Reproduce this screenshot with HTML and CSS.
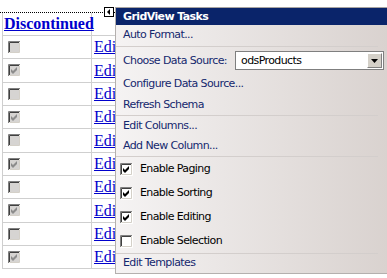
FILE: index.html
```html
<!DOCTYPE html>
<html>
<head>
<meta charset="utf-8">
<link rel="stylesheet" href="styles.css">
</head>
<body>
<svg class="defs" width="0" height="0" aria-hidden="true">
  <defs>
    <symbol id="box" viewBox="0 0 13 13">
      <path d="M0.5 12 V0.5 H12" stroke="#808080" fill="none"/>
      <path d="M1.5 11 V1.5 H11" stroke="#404040" fill="none"/>
      <path d="M0.5 12.5 H12.5 V0.5" stroke="#ffffff" fill="none"/>
      <path d="M1.5 11.5 H11.5 V1.5" stroke="#d4d0c8" fill="none"/>
    </symbol>
    <symbol id="tick" viewBox="0 0 13 13">
      <polygon points="3,5 5,7 9,3 9,6 5,10 3,8"/>
    </symbol>
  </defs>
</svg>
<div class="designer">
  <div class="grid-frame">
    <div class="grid">
      <div class="cell head"><a href="#">Discontinued</a></div>
      <div class="cell"></div>

      <div class="cell chk"><svg class="cb off" viewBox="0 0 13 13"><rect x="2" y="2" width="9" height="9"/><use href="#box"/></svg></div>
      <div class="cell"><a href="#">Edit</a></div>
      <div class="cell chk"><svg class="cb off" viewBox="0 0 13 13"><rect x="2" y="2" width="9" height="9"/><use href="#box"/><use class="mark" href="#tick"/></svg></div>
      <div class="cell"><a href="#">Edit</a></div>
      <div class="cell chk"><svg class="cb off" viewBox="0 0 13 13"><rect x="2" y="2" width="9" height="9"/><use href="#box"/></svg></div>
      <div class="cell"><a href="#">Edit</a></div>
      <div class="cell chk"><svg class="cb off" viewBox="0 0 13 13"><rect x="2" y="2" width="9" height="9"/><use href="#box"/><use class="mark" href="#tick"/></svg></div>
      <div class="cell"><a href="#">Edit</a></div>
      <div class="cell chk"><svg class="cb off" viewBox="0 0 13 13"><rect x="2" y="2" width="9" height="9"/><use href="#box"/></svg></div>
      <div class="cell"><a href="#">Edit</a></div>
      <div class="cell chk"><svg class="cb off" viewBox="0 0 13 13"><rect x="2" y="2" width="9" height="9"/><use href="#box"/><use class="mark" href="#tick"/></svg></div>
      <div class="cell"><a href="#">Edit</a></div>
      <div class="cell chk"><svg class="cb off" viewBox="0 0 13 13"><rect x="2" y="2" width="9" height="9"/><use href="#box"/></svg></div>
      <div class="cell"><a href="#">Edit</a></div>
      <div class="cell chk"><svg class="cb off" viewBox="0 0 13 13"><rect x="2" y="2" width="9" height="9"/><use href="#box"/><use class="mark" href="#tick"/></svg></div>
      <div class="cell"><a href="#">Edit</a></div>
      <div class="cell chk"><svg class="cb off" viewBox="0 0 13 13"><rect x="2" y="2" width="9" height="9"/><use href="#box"/></svg></div>
      <div class="cell"><a href="#">Edit</a></div>
      <div class="cell chk"><svg class="cb off" viewBox="0 0 13 13"><rect x="2" y="2" width="9" height="9"/><use href="#box"/><use class="mark" href="#tick"/></svg></div>
      <div class="cell"><a href="#">Edit</a></div>
    </div>
  </div>

  <span class="smart-tag"><svg viewBox="0 0 10 10" width="10" height="10"><rect x="0.5" y="0.5" width="9" height="9" fill="#fff" stroke="#000"/><polygon points="6,2 6,8 3,5" fill="#000"/></svg></span>

  <div class="tasks">
    <div class="tasks-head">GridView Tasks</div>
    <div class="item link r21">Auto Format...</div>
    <div class="sep"></div>
    <div class="choose">
      <span>Choose Data Source:</span>
      <div class="combo"><span class="combo-text">odsProducts</span><span class="combo-btn"><svg viewBox="0 0 7 4" width="7" height="4"><polygon points="0,0 7,0 3.5,4"/></svg></span></div>
    </div>
    <div class="item link r21">Configure Data Source...</div>
    <div class="item link r20">Refresh Schema</div>
    <div class="sep"></div>
    <div class="item link r20">Edit Columns...</div>
    <div class="item link r20">Add New Column...</div>
    <div class="sep"></div>
    <div class="opt"><svg class="cb on" viewBox="0 0 13 13"><rect x="2" y="2" width="9" height="9"/><use href="#box"/><use class="mark" href="#tick"/></svg><span>Enable Paging</span></div>
    <div class="opt"><svg class="cb on" viewBox="0 0 13 13"><rect x="2" y="2" width="9" height="9"/><use href="#box"/><use class="mark" href="#tick"/></svg><span>Enable Sorting</span></div>
    <div class="opt"><svg class="cb on" viewBox="0 0 13 13"><rect x="2" y="2" width="9" height="9"/><use href="#box"/><use class="mark" href="#tick"/></svg><span>Enable Editing</span></div>
    <div class="opt"><svg class="cb on" viewBox="0 0 13 13"><rect x="2" y="2" width="9" height="9"/><use href="#box"/></svg><span>Enable Selection</span></div>
    <div class="sep"></div>
    <div class="item link last">Edit Templates</div>
  </div>
</div>
</body>
</html>
```

FILE: styles.css
```css
html, body {
  margin: 0;
  background: #ffffff;
}

body {
  font-family: "Liberation Serif", "Times New Roman", serif;
}

.defs {
  position: absolute;
  width: 0;
  height: 0;
}

.designer {
  position: relative;
  width: 387px;
  height: 278px;
  overflow: hidden;
}

/* GridView design surface */
.grid-frame {
  margin-top: 12px;
  border-top: 1px dotted #000000;
}

.grid {
  display: grid;
  grid-template-columns: 89px 80px;
  grid-template-rows: 23px 23px 24px 23px 23px 24px 23px 23px 24px 23px 23px;
  margin-left: 2px;
  width: max-content;
  border-left: 1px solid #cfcfcf;
}

.cell {
  box-sizing: border-box;
  display: flex;
  align-items: center;
  border-right: 1px solid #cfcfcf;
  border-bottom: 1px solid #cfcfcf;
  padding-left: 2px;
  font-size: 16px;
}

.cell a {
  color: #0000cc;
  text-decoration: underline;
}

.cell.head {
  padding-left: 1px;
}

.cell.head a {
  font-weight: bold;
}

.cell.chk {
  padding-left: 5px;
}

.cb {
  display: block;
  width: 13px;
  height: 13px;
  flex: none;
}

.cb.off rect {
  fill: #d6d4d2;
}

.cb.off .mark {
  fill: #8c8c8c;
}

.cb.on rect {
  fill: #ffffff;
}

.cb.on .mark {
  fill: #000000;
}

/* smart tag glyph */
.smart-tag {
  position: absolute;
  left: 104px;
  top: 7px;
  width: 10px;
  height: 10px;
  display: block;
}

.smart-tag svg {
  display: block;
}

/* Tasks panel */
.tasks {
  position: absolute;
  left: 115px;
  top: 7px;
  width: 272px;
  border-top: 1px solid #a8a4a2;
  border-left: 1px solid #b4b0ae;
  border-bottom: 1px solid #b4b0ae;
  background: linear-gradient(to right, #f5f3f3, #d9d2cf);
  font-family: "DejaVu Sans", "Liberation Sans", sans-serif;
  font-size: 11px;
  letter-spacing: -0.6px;
  color: #000000;
}

.tasks-head {
  height: 17px;
  line-height: 17px;
  padding-left: 7px;
  background: #0a246a;
  color: #ffffff;
  font-weight: bold;
}

.item {
  padding-left: 7px;
  line-height: 20px;
}

.r21 {
  height: 21px;
}

.r20 {
  height: 20px;
}

.item.last {
  height: 19px;
  line-height: 18px;
}

.link {
  color: #14286e;
}

.sep {
  height: 1px;
  margin-right: 10px;
  background: #d3cecc;
}

.choose {
  height: 27px;
  display: flex;
  align-items: center;
  justify-content: space-between;
  padding-left: 7px;
  padding-right: 4px;
  color: #14286e;
}

.combo {
  box-sizing: border-box;
  width: 149px;
  height: 19px;
  display: flex;
  align-items: center;
  justify-content: space-between;
  border: 1px solid #7f7f7f;
  background: #ffffff;
  padding-left: 5px;
  padding-right: 1px;
  color: #000000;
}

.combo-btn {
  box-sizing: border-box;
  width: 15px;
  height: 15px;
  display: flex;
  align-items: center;
  justify-content: center;
  background: #d4d0c8;
  border-top: 1px solid #ffffff;
  border-left: 1px solid #ffffff;
  border-right: 1px solid #808080;
  border-bottom: 1px solid #808080;
}

.combo-btn svg {
  display: block;
}

.opt {
  height: 24px;
  display: flex;
  align-items: center;
  gap: 7px;
  padding-left: 4px;
  line-height: 24px;
}
```
